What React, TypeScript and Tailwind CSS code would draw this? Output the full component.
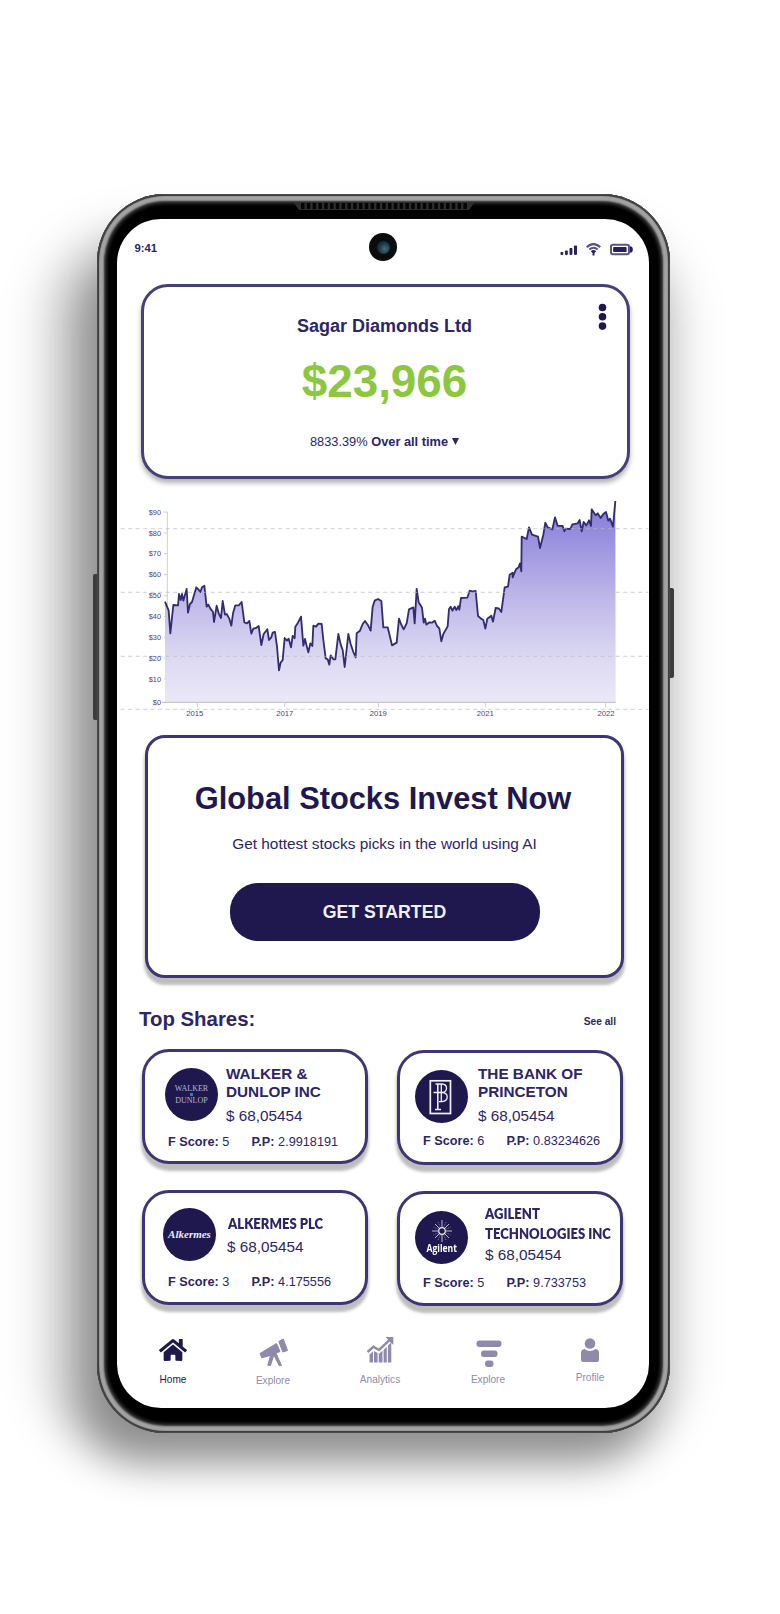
import React from "react";
import { FaHome } from "react-icons/fa";

const line1: number[][] = [
  [225, 335], [236, 362], [241, 430], [250, 345], [264, 346], [267, 312], [272, 330], [276, 312], [280, 332], [290, 297], [294, 368], [300, 342], [306, 336], [319, 292], [325, 298], [331, 306], [336, 292], [343, 287], [350, 350], [355, 344], [361, 356], [369, 366], [372, 396], [380, 347], [386, 370], [393, 384], [398, 333], [405, 374], [410, 372], [418, 386], [424, 407], [429, 370], [436, 346], [446, 346], [455, 336], [463, 397], [471, 400], [478, 393], [484, 431], [490, 416], [498, 414], [506, 408], [514, 465], [521, 432], [532, 418], [537, 450], [544, 442], [548, 428], [555, 426], [561, 470], [567, 541], [572, 518], [578, 510], [584, 444], [591, 452], [596, 446], [603, 472], [608, 438], [614, 444], [616, 410], [624, 398], [633, 380], [640, 467], [645, 447], [650, 468], [655, 487], [661, 460], [667, 468], [670, 407], [678, 410], [685, 401], [695, 402], [700, 450], [707, 505], [713, 508], [718, 524], [722, 496], [730, 508], [736, 508], [745, 432], [752, 463], [758, 480], [764, 531], [775, 432], [782, 462], [790, 486], [797, 502], [800, 430], [810, 422], [818, 402], [825, 393], [833, 404], [842, 422], [848, 350], [854, 332], [864, 327], [874, 333],
];
const line2: number[][] = [
  [10, 412], [23, 412], [30, 440], [36, 466], [50, 458], [57, 386], [63, 402], [71, 418], [80, 400], [87, 358], [100, 352], [104, 400], [110, 297], [116, 337], [126, 353], [131, 398], [135, 386], [139, 404], [148, 397], [156, 398], [164, 392], [171, 408], [178, 415], [184, 454], [190, 432], [203, 409], [207, 357], [212, 350], [217, 362], [224, 350], [229, 360], [235, 349], [238, 359], [243, 324], [262, 323], [269, 302], [277, 304], [287, 303], [294, 378], [303, 386], [310, 390], [316, 416], [322, 386], [334, 377], [339, 395], [347, 354], [356, 355], [364, 366], [374, 292], [384, 290], [389, 254], [398, 248], [398, 262], [408, 238], [416, 232], [420, 220], [424, 244], [425, 140], [440, 147], [447, 112], [456, 134], [474, 140], [480, 174], [490, 134], [496, 98], [503, 112], [517, 118], [525, 82], [533, 107], [548, 108], [553, 124], [557, 116], [571, 117], [577, 103], [593, 100], [599, 90], [605, 124], [611, 96], [619, 106], [627, 91], [633, 108], [635, 58], [647, 76], [653, 70], [662, 84], [670, 72], [678, 66], [685, 92], [690, 86], [699, 110], [706, 33],
];
const points = [...line1, ...line2.map(([x, y]) => [x + 870, y])].map((p) => p.join(",")).join(" ");

const yTicks = [
  ["$90", 66], ["$80", 129], ["$70", 191], ["$60", 254], ["$50", 317], ["$40", 379], ["$30", 442], ["$20", 504], ["$10", 567], ["$0", 637],
] as const;
const xTicks = [["2015", 314, 322], ["2017", 584, 584], ["2019", 865, 865], ["2021", 1186, 1186], ["2022", 1548, 1547]] as const;

function Chart() {
  return (
    <svg className="mt-[11px] block h-[235px] w-[532px] shrink-0" viewBox="81 0 1596 705">
      <defs>
        <linearGradient id="area" x1="0" y1="0" x2="0" y2="1">
          <stop offset="0" stopColor="#8378d8" />
          <stop offset="0.5" stopColor="#c0b9ea" />
          <stop offset="0.78" stopColor="#dcd9f2" />
          <stop offset="1" stopColor="#ebe8f8" />
        </linearGradient>
      </defs>
      <path d="M220 66h12V637M222 129h10M222 191h10M222 254h10M222 317h10M222 379h10M222 442h10M222 504h10M222 567h10" stroke="#cfcfd4" strokeWidth="3" fill="none" />
      <polygon points={`${points} 1577,637 225,637`} fill="url(#area)" />
      <polyline points={points} fill="none" stroke="#342c70" strokeWidth="5.5" strokeLinejoin="round" />
      <path d="M92 116H1675M92 307H1675M92 499H1675M92 658H1675" stroke="#b9b9c4" strokeOpacity="0.55" strokeWidth="4" strokeDasharray="12 10.5" fill="none" />
      <path d="M216 637H1577" stroke="#c5c5cb" strokeWidth="4" />
      {xTicks.map(([label, x, tick]) => (
        <g key={label}>
          <path d={`M${tick} 637v14`} stroke="#cfcfd4" strokeWidth="3" />
          <text x={x} y="678" textAnchor="middle" fontSize="23" fill="#4a4380">{label}</text>
        </g>
      ))}
      {yTicks.map(([label, y]) => (
        <text key={label} x="213" y={y + 8} textAnchor="end" fontSize="22" fill="#4a4380">{label}</text>
      ))}
    </svg>
  );
}

function StatusIcons() {
  return (
    <svg className="absolute top-[24px] left-[442px] h-[14px] w-[76px]" viewBox="0 0 76 14" fill="#28205f">
      <rect x="1.5" y="9" width="2.8" height="2.9" rx="0.8" />
      <rect x="6" y="7.5" width="2.8" height="4.4" rx="0.8" />
      <rect x="10.500" y="5" width="2.900" height="6.900" rx="0.800" />
      <rect x="15" y="2.500" width="3" height="9.400" rx="0.800" />
      <path d="M27.800 4.200Q34.500 -2 41.200 4.200" fill="none" stroke="#5a5389" strokeWidth="2.300" />
      <path d="M30.300 6.600Q34.500 2.900 38.700 6.600" fill="none" stroke="#5a5389" strokeWidth="2" />
      <path d="M31.800 8.200Q34.500 5.800 37.200 8.200L35.500 10V12.600H33.500V10Z" />
      <rect x="52" y="1.800" width="18" height="9.500" rx="2" fill="none" stroke="#5a5389" strokeWidth="2" />
      <rect x="54.100" y="4.100" width="13.500" height="5" rx="0.800" />
      <path d="M71 3.300q2.800 0 2.800 3.200t-2.800 3.200z" />
    </svg>
  );
}

function BankLogo() {
  return (
    <svg viewBox="0 0 53 53" className="h-[53px] w-[53px]" fill="none" stroke="#f0eff6">
      <rect x="15.300" y="10.800" width="20.200" height="32.700" strokeWidth="1.700" />
      <path d="M20.500 14h6.500q4.500.2 4.500 4.200 0 3.600-4 4.200M18.500 22.500h8.500q5.200.3 5.200 4.600t-5.200 4.500H24M26.300 14v17.500" strokeWidth="1.300" />
      <path d="M22.800 14v25.500M20 39.500h6" strokeWidth="1.600" />
    </svg>
  );
}

function AgilentLogo() {
  return (
    <div className="flex h-full w-full flex-col items-center pt-[8px]">
      <svg viewBox="-12 -12 24 24" className="h-[24px] w-[24px] shrink-0" stroke="#e9e8f2" fill="none">
        <circle r="3.300" strokeWidth="1.200" />
        <path d="M0-4v-7M0 4v7M4 0h6M-4 0h-6M3-3l4-4M-3-3l-4-4M3 3l4 4M-3 3l-4 4" strokeWidth="0.800" />
        <path d="M2-4.500l2-4.500M-2-4.500l-2-4.500M2 4.500l2 4.500M-2 4.500l-2 4.500M4.500 2l4 2M4.500-2l4-2M-4.500 2l-4 2M-4.500-2l-4-2" strokeWidth="0.500" strokeDasharray="1 1" />
      </svg>
      <span className="mt-[-1px] scale-x-[0.86] font-['Open_Sans'] text-[10px] leading-[12px] font-bold text-white">Agilent</span>
    </div>
  );
}

type ShareProps = {
  className: string;
  logoClass: string;
  logo: React.ReactNode;
  name: React.ReactNode;
  nameClass: string;
  textClass: string;
  priceClass: string;
  score: string;
  pp: string;
  scoreClass: string;
};

function Share(p: ShareProps) {
  return (
    <div className={`flex w-[226px] flex-col rounded-[27px] border-[3px] border-[#3d3674] bg-white shadow-[0_6px_3px_1px_rgba(0,0,0,0.26)] ${p.className}`}>
      <div className="-mt-px -ml-px flex h-[82px]">
        <div className={`flex h-[53px] w-[53px] shrink-0 items-center justify-center rounded-full bg-[#1e184f] ${p.logoClass}`}>{p.logo}</div>
        <div className={p.textClass}>
          <div className={`whitespace-nowrap ${p.nameClass}`}>{p.name}</div>
          <div className={`text-[15.300px] leading-[18px] ${p.priceClass}`}>$ 68,05454</div>
        </div>
      </div>
      <div className={`-ml-px flex text-[12.700px] leading-[16px] whitespace-nowrap ${p.scoreClass}`}>
        <div className="w-[83.500px]"><b>F Score:</b> {p.score}</div>
        <div><b>P.P:</b> {p.pp}</div>
      </div>
    </div>
  );
}

const arial = "text-[15.300px] leading-[18px] font-bold";
const humanist = "font-['Lato'] text-[14.200px] leading-[19.500px] font-extrabold origin-left scale-x-[0.92]";

function NavItem({ label, className, labelClass, children }: { label: string; className: string; labelClass: string; children: React.ReactNode }) {
  return (
    <div className={`flex w-[60px] flex-col items-center ${className}`}>
      <div className="flex h-[30px] w-[30px] items-center justify-center">{children}</div>
      <div className={`text-[10.100px] leading-[12px] ${labelClass}`}>{label}</div>
    </div>
  );
}

export default function App() {
  return (
    <div className="relative h-[1614px] w-[780px] overflow-hidden bg-white pt-[194px] pl-[97px] font-['Liberation_Sans',Arial,sans-serif] text-[#2c2566]">
      <div className="absolute top-[225px] left-[40px] h-[1235px] w-[645px] rounded-[90px] bg-black/13 blur-[20px]" />
      <div className="absolute top-[250px] left-[76px] h-[1212px] w-[578px] rounded-[70px] bg-black/36 blur-[20px]" />
      <div className="absolute top-[574px] left-[93px] h-[146px] w-[6px] rounded-l-[2px] bg-[#3c3c3c]" />
      <div className="absolute top-[588px] left-[668px] h-[90px] w-[6px] rounded-r-[2px] bg-[#3c3c3c]" />
      <div className="relative h-[1239px] w-[573px] rounded-[68px] bg-black pt-[25px] pl-[20px] shadow-[inset_0_0_0_1px_#4a4a4a,inset_0_0_1px_2px_#333,inset_0_0_2px_7px_#a3a3a3,inset_0_0_3px_10px_#2a2a2a]">
        <svg className="absolute top-[8px] left-[196px] h-[9px] w-[182px]" viewBox="0 0 182 9">
          <path d="M0 0H182L176 8H6Z" fill="#2e2e2e" />
          <path d="M8 4H175" stroke="#050505" strokeWidth="6" strokeDasharray="3.500 2.300" />
        </svg>
        <div className="relative flex h-[1189px] w-[532px] flex-col overflow-hidden rounded-[44px] bg-white">
          <div className="relative h-[65px] shrink-0">
            <span className="absolute top-[22px] left-[17.500px] text-[11.300px] leading-[14px] font-bold">9:41</span>
            <div className="absolute top-[14px] left-[252px] flex h-[28px] w-[28px] items-center justify-center rounded-full bg-[#0b0c0e]">
              <div className="h-[13px] w-[13px] rounded-full bg-[radial-gradient(circle_at_60%_60%,#3f7080,#1c3846_50%,#0e1a22)]" />
            </div>
            <StatusIcons />
          </div>

          <section className="relative ml-[24px] flex h-[195px] w-[489px] shrink-0 flex-col items-center rounded-[27px] border-[3px] border-[#454078] bg-white pt-[29px] pr-[2px] shadow-[0_4px_5px_rgba(0,0,0,0.3)]">
            <h2 className="text-[18px] leading-[20px] font-bold">Sagar Diamonds Ltd</h2>
            <p className="mt-[23px] text-[45.800px] leading-[46px] font-bold text-[#8dc63f]">$23,966</p>
            <p className="mt-[29px] flex items-center text-[12.800px] leading-[16px]">
              <span>8833.39% <b>Over all time</b></span>
              <svg className="mb-[2px] ml-[4px] h-[7px] w-[7px]" viewBox="0 0 7 7"><path d="M0 0H7L3.500 7Z" fill="#2c2566" /></svg>
            </p>
            <svg className="absolute top-[16px] right-[20px] h-[28px] w-[9px]" viewBox="0 0 9 28" fill="#1e184f">
              <circle cx="4.500" cy="4.500" r="3.800" /><circle cx="4.500" cy="13.800" r="3.800" /><circle cx="4.500" cy="23.100" r="3.800" />
            </svg>
          </section>

          <Chart />

          <section className="mt-[10px] ml-[28px] flex h-[243px] w-[479px] shrink-0 flex-col items-center rounded-[20px] border-[3px] border-[#3d3674] bg-white pt-[45px] shadow-[0_6px_3px_1px_rgba(0,0,0,0.26)]">
            <h1 className="pr-[3px] text-[30.800px] leading-[32px] font-bold text-[#1e184f]">Global Stocks Invest Now</h1>
            <p className="mt-[20px] text-[15.400px] leading-[18px]">Get hottest stocks picks in the world using AI</p>
            <button className="mt-[30px] h-[58px] w-[310px] rounded-[28px] bg-[#1e184f] pb-[1px] text-[17.700px] leading-[20px] font-bold text-[#f1f0f7]">GET STARTED</button>
          </section>

          <div className="mt-[29px] flex h-[24px] shrink-0 justify-between pr-[33px] pl-[22px] font-bold">
            <h3 className="text-[20.400px] leading-[24px]">Top Shares:</h3>
            <a className="pt-[9px] text-[10.200px] leading-[12px]">See all</a>
          </div>

          <div className="mt-[18px] ml-[25px] flex h-[257px] shrink-0 gap-[29px]">
            <div className="flex flex-col gap-[26px]">
              <Share className="h-[115px]" logoClass="mt-[17px] ml-[21px]" textClass="ml-[8px] pt-[14px]" nameClass={arial} priceClass="mt-[6px]" scoreClass="pl-[24px] pt-[1px]"
                logo={<div className="relative flex flex-col items-center gap-[4px] font-['Liberation_Serif'] text-[8px] leading-[8px] text-[#b9b6d2]"><span>WALKER</span><span>DUNLOP</span><i className="absolute top-[8px] h-[3px] w-[3px] bg-[#2585ad]" /></div>}
                name={<>WALKER &amp;<br />DUNLOP INC</>} score="5" pp="2.9918191" />
              <Share className="h-[115px]" logoClass="mt-[16px] ml-[19px]" textClass="ml-[11px] pt-[22px]" nameClass={`${humanist} ml-[1px]`} priceClass="mt-[4px]" scoreClass="pl-[24px]"
                logo={<span className="font-['Liberation_Serif'] text-[11px] font-bold text-[#eceaf5] italic">Alkermes</span>}
                name="ALKERMES PLC" score="3" pp="4.175556" />
            </div>
            <div className="flex flex-col gap-[26px] pt-[1px]">
              <Share className="h-[115px]" logoClass="mt-[18px] ml-[16px]" textClass="ml-[10px] pt-[13px]" nameClass={arial} priceClass="mt-[6px]" scoreClass="pl-[24px] mt-[-1px]"
                logo={<BankLogo />} name={<>THE BANK OF<br />PRINCETON</>} score="6" pp="0.83234626" />
              <Share className="h-[115px]" logoClass="mt-[18px] ml-[16px]" textClass="ml-[17px] pt-[11px]" nameClass={humanist} priceClass="mt-[2.500px]" scoreClass="pl-[24px]"
                logo={<AgilentLogo />} name={<>AGILENT<br />TECHNOLOGIES INC</>} score="5" pp="9.733753" />
            </div>
          </div>

          <nav className="relative mt-[29px] flex h-[60px] shrink-0 text-[#8f8aac]">
            <NavItem label="Home" className="ml-[26px]" labelClass="mt-[9px] text-[#1e184f]">
              <FaHome className="h-[28px] w-[28px] text-[#1e184f]" />
            </NavItem>
            <NavItem label="Explore" className="ml-[40px]" labelClass="mt-[10px]">
              <svg viewBox="0 0 30 30" className="h-[30px] w-[30px] translate-y-[2px]" fill="currentColor">
                <path d="M2 16.500L18.500 6.500L22 14.500L18 16.200L23.500 28.500L21.300 28.800L15.800 18L12.500 28.600L9.800 28.200L12.500 18.400L3.800 20.800Z" strokeLinejoin="round" stroke="currentColor" strokeWidth="1" />
                <path d="M20.800 4.500L25.300 2L29.500 13.500L24.800 15Z" stroke="currentColor" strokeWidth="1" strokeLinejoin="round" />
              </svg>
            </NavItem>
            <NavItem label="Analytics" className="ml-[47px]" labelClass="mt-[9px]">
              <svg viewBox="0 0 30 30" className="h-[30px] w-[30px]" fill="currentColor">
                <path d="M4.500 19.500l3.500-3v11H4.500zM9 16l3.600 2v9.500H9zM13.700 19l3.800-3.300v11.800h-3.800zM18.600 15l3.200-3.300v15.800h-3.200zM22.900 10.500l3.400-3v20h-3.400z" />
                <path d="M2.500 17L8.500 11.800L14 15L25 4.700" fill="none" stroke="currentColor" strokeWidth="2.400" />
                <path d="M20.500 2H28.300V9.800L25.500 7.500Z" />
              </svg>
            </NavItem>
            <NavItem label="Explore" className="ml-[48px]" labelClass="mt-[9px]">
              <svg viewBox="0 0 30 30" className="h-[30px] w-[30px] translate-x-[1px] translate-y-[3px]" fill="currentColor">
                <rect x="2.500" y="2.500" width="25" height="6.500" rx="3" /><rect x="7" y="12.500" width="16.500" height="6.500" rx="3" /><rect x="11" y="22.500" width="8.500" height="6.500" rx="3" />
              </svg>
            </NavItem>
            <NavItem label="Profile" className="ml-[42px]" labelClass="mt-[7px]">
              <svg viewBox="0 0 30 30" className="h-[30px] w-[30px]" fill="currentColor">
                <circle cx="15" cy="8.500" r="5.300" />
                <path d="M6 18Q6 14.500 9.500 14Q15 18 20.500 14Q24 14.500 24 18V25Q24 27 22 27H8Q6 27 6 25Z" />
              </svg>
            </NavItem>
          </nav>
        </div>
      </div>
    </div>
  );
}
